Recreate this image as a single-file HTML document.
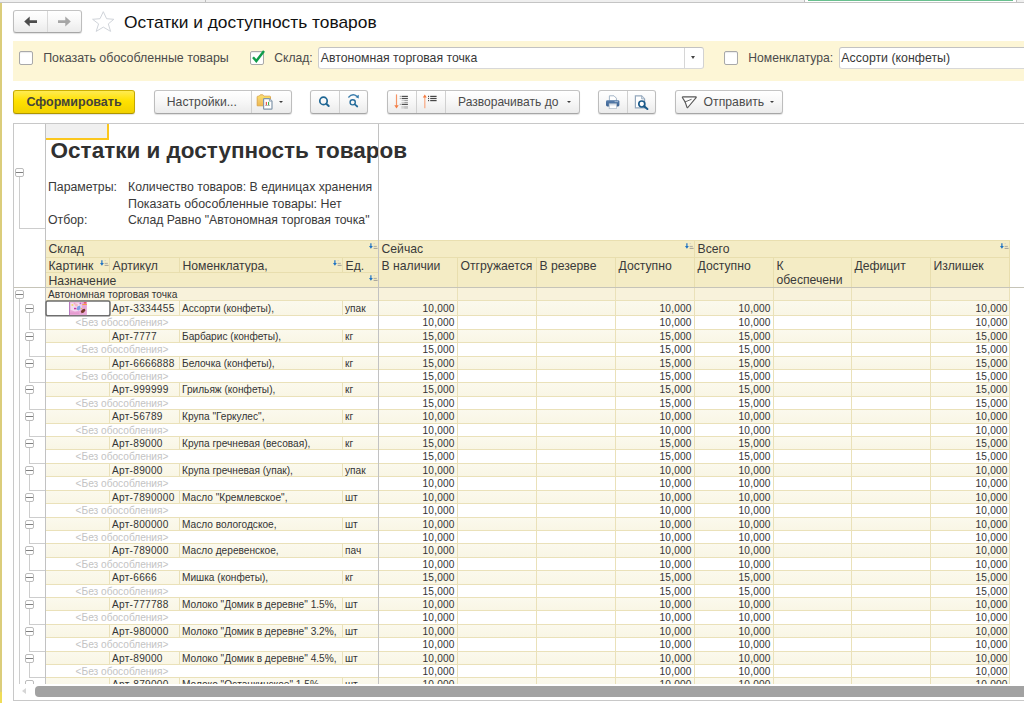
<!DOCTYPE html>
<html><head><meta charset="utf-8"><title>Остатки и доступность товаров</title>
<style>
*{box-sizing:border-box;margin:0;padding:0}
html,body{width:1024px;height:703px;overflow:hidden;background:#fff}
body{position:relative;font-family:"Liberation Sans",sans-serif;color:#3a3a3a}
.a{position:absolute;white-space:nowrap}
.btn{position:absolute;border:1px solid #bcbcbc;border-color:#c4c4c4 #bdbdbd #a6a6a6 #bdbdbd;border-radius:3px;background:linear-gradient(#ffffff,#f7f7f7 50%,#ebebeb);box-shadow:0 1px 1px rgba(0,0,0,.12)}
.lbl{position:absolute;white-space:nowrap;font-size:12px;color:#4b4b4b;line-height:14px}
.cb{position:absolute;width:14px;height:14px;border:1px solid #a9a9a9;border-radius:2px;background:#fff;box-shadow:inset 0 1px 1px rgba(0,0,0,.08)}
.inp{position:absolute;border:1px solid #cfcfcf;border-color:#c2c2c2 #d2d2d2 #d8d8d8 #cdcdcd;border-radius:3px;background:#fff}
.hd{position:absolute;background:#f4ecc5;border-right:1px solid #e8deae;border-bottom:1px solid #e8deae;font-size:12.2px;line-height:14px;color:#3a3a3a;padding:1px 0 0 2.5px;white-space:nowrap;overflow:hidden}
.c{position:absolute;border-right:1px solid #eae1b9;border-bottom:1px solid #eae1b9;font-size:10.15px;color:#343434;white-space:nowrap;overflow:hidden;padding:1px 2px 0 2px}
.d{letter-spacing:.18px}
.da{letter-spacing:.27px}
.it{background:linear-gradient(#fbf9ed,#f9f6e5)}
.gr{background:#f8f2db}
.sb{background:#fff}
.n{text-align:right;padding-right:2.4px}
.nl{padding-right:1.4px}
.g{color:#c3c3c3}
.tl{position:absolute;background:#cdcdcd}
.tb{position:absolute;width:9px;height:9px;border:1px solid #bcbcbc;border-radius:2px;background:#fff}
.tb:after{content:"";position:absolute;left:0;top:3px;width:7px;height:1px;background:#808080}
</style></head>
<body>
<div class="a" style="left:0;top:0;width:1024px;height:2px;background:#efefef"></div>
<div class="a" style="left:0;top:2px;width:1024px;height:1px;background:#c4c4c4"></div>
<div class="a" style="left:205px;top:0;width:1px;height:2px;background:#bdbdbd"></div>
<div class="a" style="left:804px;top:0;width:1px;height:2px;background:#bdbdbd"></div>
<div class="a" style="left:1016px;top:0;width:1px;height:2px;background:#bdbdbd"></div>
<div class="a" style="left:805px;top:0;width:211px;height:2px;background:#fff"></div>
<div class="a" style="left:808px;top:0;width:205px;height:1px;background:#69c08f"></div>
<div class="a" style="left:0;top:3px;width:2px;height:700px;background:#dbcd7b"></div>
<div class="a" style="left:0;top:692px;width:2px;height:11px;background:#efdc58"></div>
<div class="btn" style="left:13px;top:10px;width:69px;height:23px"></div>
<div class="a" style="left:47px;top:11px;width:1px;height:21px;background:#d9d9d9"></div>
<svg class="a" style="left:13px;top:10px" width="70" height="23" viewBox="0 0 70 23"><path d="M11.2 11.6 L16.7 6.6 V10.2 H24 V13 H16.7 V16.6 Z" fill="#4c4c4c"/><path d="M57.8 11.6 L52.3 6.6 V10.2 H45 V13 H52.3 V16.6 Z" fill="#a6a6a6"/></svg>
<svg class="a" style="left:91px;top:10px" width="24" height="24" viewBox="0 0 24 24"><path d="M12.3 1.7 L15.6 8.7 L22.8 9.3 L17.3 13.9 L19.6 21.4 L12.3 17.1 L5.2 21.4 L7.6 13.9 L1.6 9.3 L9 8.7 Z" fill="#fff" stroke="#d0d4da" stroke-width="1" stroke-linejoin="round"/></svg>
<div class="a" style="left:124px;top:12px;font-size:17.35px;line-height:20px;color:#111">Остатки и доступность товаров</div>
<div class="a" style="left:13px;top:41px;width:1011px;height:40px;background:#fdf6d6"></div>
<div class="cb" style="left:19px;top:51px"></div>
<div class="lbl" style="left:43.2px;top:51px;font-size:12.42px">Показать обособленные товары</div>
<div class="cb" style="left:250px;top:51px"></div>
<svg class="a" style="left:250px;top:49px" width="16" height="16" viewBox="0 0 16 16"><path d="M3 8.2 L6.3 12 L14 2" fill="none" stroke="#0f9d4a" stroke-width="2.4"/></svg>
<div class="lbl" style="left:274.3px;top:51px;font-size:12.1px">Склад:</div>
<div class="inp" style="left:318px;top:47px;width:386px;height:22px"></div>
<div class="a" style="left:684px;top:48px;width:1px;height:20px;background:#d6d6d6"></div>
<div class="a" style="left:690.6px;top:56px;width:0;height:0;border-left:2.7px solid transparent;border-right:2.7px solid transparent;border-top:3px solid #444"></div>
<div class="lbl" style="left:320.8px;top:51px;color:#383838;font-size:12.25px">Автономная торговая точка</div>
<div class="cb" style="left:724px;top:51px"></div>
<div class="lbl" style="left:748.3px;top:51px;font-size:12.15px">Номенклатура:</div>
<div class="inp" style="left:839px;top:47px;width:200px;height:22px"></div>
<div class="lbl" style="left:841.3px;top:51px;color:#383838;font-size:12.35px">Ассорти (конфеты)</div>
<div class="btn" style="left:13px;top:90px;width:122px;height:24px;border-color:#cdb100 #c4a700 #ad9400 #c4a700;background:linear-gradient(#ffeb52,#ffe100 45%,#f1d100)"></div>
<div class="a" style="left:13px;top:95px;width:122px;text-align:center;font-size:12.5px;font-weight:bold;color:#44443a;line-height:14px">Сформировать</div>
<div class="btn" style="left:154px;top:90px;width:138px;height:24px"></div>
<div class="a" style="left:251px;top:91px;width:1px;height:22px;background:#d0d0d0"></div>
<div class="lbl" style="left:166.8px;top:95px;font-size:12.22px">Настройки...</div>
<div class="btn" style="left:310px;top:90px;width:58px;height:24px"></div>
<div class="a" style="left:339px;top:91px;width:1px;height:22px;background:#d0d0d0"></div>
<div class="btn" style="left:387px;top:90px;width:193px;height:24px"></div>
<div class="a" style="left:416px;top:91px;width:1px;height:22px;background:#d0d0d0"></div>
<div class="a" style="left:445px;top:91px;width:1px;height:22px;background:#d0d0d0"></div>
<div class="lbl" style="left:458px;top:95px;font-size:12.05px">Разворачивать до</div>
<div class="btn" style="left:598px;top:90px;width:58px;height:24px"></div>
<div class="a" style="left:627px;top:91px;width:1px;height:22px;background:#d0d0d0"></div>
<div class="btn" style="left:675px;top:90px;width:108px;height:24px"></div>
<div class="lbl" style="left:703.6px;top:95px;font-size:12.22px">Отправить</div>
<div class="a" style="left:279px;top:101px;width:0;height:0;border-left:2.8px solid transparent;border-right:2.8px solid transparent;border-top:2.9px solid #3e3e3e"></div>
<div class="a" style="left:566.9px;top:101px;width:0;height:0;border-left:2.8px solid transparent;border-right:2.8px solid transparent;border-top:2.9px solid #3e3e3e"></div>
<div class="a" style="left:770.3px;top:101px;width:0;height:0;border-left:2.8px solid transparent;border-right:2.8px solid transparent;border-top:2.9px solid #3e3e3e"></div>
<svg class="a" style="left:255px;top:92px" width="20" height="20" viewBox="0 0 20 20"><defs><linearGradient id="fg" x1="0" y1="0" x2="0" y2="1"><stop offset="0" stop-color="#f8dc84"/><stop offset="1" stop-color="#eeb94e"/></linearGradient></defs><path d="M2.2 13.8 V4.9 Q2.2 4.2 2.9 4.2 H4.2 L4.7 3.4 Q4.9 2.8 5.7 2.8 H7.5 Q8.2 2.8 8.4 3.4 L8.9 4.2 H14.8 Q15.5 4.2 15.5 4.9 V13.8 Z" fill="url(#fg)" stroke="#dba446" stroke-width=".9"/><rect x="2.8" y="4.7" width="12.1" height="1.5" fill="#fadb5c"/><path d="M9.2 6.6 H14.4 L17 9.2 V16.5 Q17 17.1 16.4 17.1 H9.2 Q8.6 17.1 8.6 16.5 V7.2 Q8.6 6.6 9.2 6.6Z" fill="#fff" stroke="#8296aa" stroke-width="1.2"/><path d="M14.4 6.6 V9.2 H17" fill="#c9d3dd" stroke="#8296aa" stroke-width=".7"/><rect x="10.8" y="9.9" width="1.1" height="3.4" fill="#e8473a"/><rect x="13" y="9.9" width="1.1" height="3.4" fill="#3fae4f"/><rect x="10" y="13.4" width="5" height=".6" fill="#9a9a9a"/></svg>
<svg class="a" style="left:315px;top:93px" width="20" height="18" viewBox="0 0 20 18"><circle cx="8.5" cy="7.9" r="3.7" fill="none" stroke="#1f6694" stroke-width="1.7"/><path d="M11.3 10.7 L13.7 13" stroke="#1f6694" stroke-width="2" stroke-linecap="round"/></svg>
<svg class="a" style="left:344px;top:92px" width="20" height="20" viewBox="0 0 20 20"><circle cx="8.7" cy="10.3" r="2.6" fill="none" stroke="#256c9b" stroke-width="1.4"/><path d="M10.8 12.3 L13.3 14.5" stroke="#256c9b" stroke-width="1.7" stroke-linecap="round"/><path d="M4.4 5.5 Q8.4 .8 13 4.3" fill="none" stroke="#3a7cab" stroke-width="1.3"/><path d="M14.8 2.8 L14.7 6.4 L11.4 5.1 Z" fill="#2f78aa"/></svg>
<svg class="a" style="left:392px;top:92px" width="20" height="20" viewBox="0 0 20 20"><path d="M4.5 2.4 V13.8" stroke="#f59466" stroke-width="1.2"/><path d="M2.3 13.3 H6.7 L4.5 16.6 Z" fill="#f37d45"/><rect x="7.7" y="3.8" width="2" height="1.2" fill="#b0b0b0"/><rect x="9.9" y="3.8" width="6" height="1.2" fill="#505050"/><rect x="7.7" y="5.9" width="2" height="1.2" fill="#b0b0b0"/><rect x="9.9" y="5.9" width="6" height="1.2" fill="#505050"/><rect x="9.5" y="8" width="2.8" height="1.1" fill="#cfcfcf"/><rect x="12.3" y="8" width="3.6" height="1.1" fill="#a2a2a2"/><rect x="9.5" y="10" width="2.8" height="1.1" fill="#cfcfcf"/><rect x="12.3" y="10" width="3.6" height="1.1" fill="#a2a2a2"/><rect x="7.7" y="11.8" width="2" height="1.2" fill="#b0b0b0"/><rect x="9.9" y="11.8" width="6" height="1.2" fill="#505050"/><rect x="9.3" y="14" width="6.6" height="2.7" fill="#d4d4d4"/><rect x="12.3" y="14" width="3.6" height="2.7" fill="#c4c4c4"/></svg>
<svg class="a" style="left:420px;top:92px" width="20" height="20" viewBox="0 0 20 20"><path d="M4.8 4.6 V16.2" stroke="#f8ae8a" stroke-width="1.3"/><path d="M2.8 5.6 L4.8 2.6 L6.8 5.6 Z" fill="#f4793d"/><rect x="8" y="3.8" width="1.1" height="1.2" fill="#4a4a4a"/><rect x="10.2" y="3.8" width="6.4" height="1.2" fill="#484848"/><rect x="8" y="5.9" width="1.1" height="1.2" fill="#4a4a4a"/><rect x="10.2" y="5.9" width="6.4" height="1.2" fill="#484848"/><rect x="8" y="8" width="1.1" height="1.2" fill="#4a4a4a"/><rect x="10.2" y="8" width="6.4" height="1.2" fill="#484848"/></svg>
<svg class="a" style="left:603px;top:92px" width="20" height="20" viewBox="0 0 20 20"><defs><linearGradient id="pg" x1="0" y1="0" x2="0" y2="1"><stop offset="0" stop-color="#5a80ae"/><stop offset="1" stop-color="#3b6292"/></linearGradient></defs><path d="M6.4 3.8 H11 L13.4 6.2 V9 H6.4 Z" fill="#fff" stroke="#a3b4c6" stroke-width="1"/><rect x="3" y="8.2" width="13.4" height="6.2" rx="1.4" fill="url(#pg)"/><rect x="11.6" y="9.3" width="3.4" height=".8" fill="#b9cbe0"/><rect x="6.2" y="11.8" width="7.2" height="4.8" fill="#fff" stroke="#b5c1ce" stroke-width=".8"/><rect x="6.6" y="12.2" width="6.4" height="1.2" fill="#d5dde6"/></svg>
<svg class="a" style="left:632px;top:92px" width="20" height="20" viewBox="0 0 20 20"><path d="M3.4 3.9 H9.6 L12.6 6.9 V15.8 H3.4 Z" fill="#fff" stroke="#93a7bc" stroke-width="1.2"/><path d="M9.6 3.9 V6.9 H12.6" fill="#d4dde7" stroke="#93a7bc" stroke-width=".8"/><circle cx="9.8" cy="12" r="3" fill="#fff" stroke="#1b5a8a" stroke-width="1.7"/><path d="M12.2 14.4 L15.4 17" stroke="#1b5a8a" stroke-width="2" stroke-linecap="round"/></svg>
<svg class="a" style="left:679px;top:92px" width="22" height="20" viewBox="0 0 22 20"><path d="M3.9 4.9 H16.8 Q17.6 4.9 17.1 5.6 L8.8 15.5 Q8.3 16 8 15.3 L6.1 9.9 L3.5 5.7 Q3.1 4.9 3.9 4.9 Z" fill="#fdfdfd" stroke="#575757" stroke-width="1.15" stroke-linejoin="round"/><path d="M6.1 9.9 L12.2 7.4" fill="none" stroke="#575757" stroke-width=".9" stroke-linecap="round"/></svg>
<div class="a" style="left:13px;top:123px;width:1020px;height:578px;border:1px solid #c8c8c8;background:#fff"></div>
<div class="a" style="left:46px;top:124px;width:63px;height:16px;background:#f0f0f0;border-right:2px solid #fbc71e;border-bottom:2px solid #fbc71e"></div>
<div class="a" style="left:50.6px;top:137px;font-size:22.5px;font-weight:bold;line-height:28px;color:#303030">Остатки и доступность товаров</div>
<div class="lbl" style="left:48px;top:180px;color:#3a3a3a;font-size:12.3px">Параметры:</div>
<div class="lbl" style="left:128px;top:180px;color:#3a3a3a;font-size:12.25px">Количество товаров: В единицах хранения</div>
<div class="lbl" style="left:128px;top:197px;color:#3a3a3a;font-size:12.42px">Показать обособленные товары: Нет</div>
<div class="lbl" style="left:48px;top:213px;color:#3a3a3a;font-size:12.3px">Отбор:</div>
<div class="lbl" style="left:128px;top:213px;color:#3a3a3a;font-size:12.23px">Склад Равно "Автономная торговая точка"</div>
<div class="hd" style="left:46px;top:240px;width:333px;height:18px;padding-top:2px">Склад</div>
<div class="hd" style="left:46px;top:258px;width:64px;height:15px;padding-top:1px">Картинк</div>
<div class="hd" style="left:110px;top:258px;width:70px;height:15px;padding-top:1px">Артикул</div>
<div class="hd" style="left:180px;top:258px;width:163px;height:15px;padding-top:1px">Номенклатура,</div>
<div class="hd" style="left:343px;top:258px;width:36px;height:15px;padding-top:1px">Ед.</div>
<div class="hd" style="left:46px;top:273px;width:333px;height:15px;padding-top:1px">Назначение</div>
<div class="hd" style="left:379px;top:240px;width:316px;height:18px;padding-top:2px">Сейчас</div>
<div class="hd" style="left:695px;top:240px;width:315px;height:18px;padding-top:2px">Всего</div>
<div class="hd" style="left:379px;top:258px;width:79px;height:30px;padding-top:1px">В наличии</div>
<div class="hd" style="left:458px;top:258px;width:79px;height:30px;padding-top:1px">Отгружается</div>
<div class="hd" style="left:537px;top:258px;width:79px;height:30px;padding-top:1px">В резерве</div>
<div class="hd" style="left:616px;top:258px;width:79px;height:30px;padding-top:1px">Доступно</div>
<div class="hd" style="left:695px;top:258px;width:79px;height:30px;padding-top:1px">Доступно</div>
<div class="hd" style="left:774px;top:258px;width:78px;height:30px;padding-top:1px">К<br>обеспечени</div>
<div class="hd" style="left:852px;top:258px;width:79px;height:30px;padding-top:1px">Дефицит</div>
<div class="hd" style="left:931px;top:258px;width:79px;height:30px;padding-top:1px">Излишек</div>
<div class="a" style="left:46px;top:240px;width:964px;height:1px;background:#e9dfb0"></div>
<svg class="a" style="left:368.9px;top:243.0px" width="9" height="7" viewBox="0 0 9 7"><path d="M1.9 .2 V4" stroke="#1d72c4" stroke-width="1.2"/><path d="M0 3.1 H3.8 L1.9 5.8Z" fill="#1d72c4"/><rect x="4.6" y=".4" width="1.2" height=".7" fill="#c4c4c4"/><rect x="4.6" y="2.9" width="3.2" height=".8" fill="#9a9a9a"/><rect x="4.6" y="4.9" width="4" height=".8" fill="#8c8c8c"/></svg>
<svg class="a" style="left:684.9px;top:243.0px" width="9" height="7" viewBox="0 0 9 7"><path d="M1.9 .2 V4" stroke="#1d72c4" stroke-width="1.2"/><path d="M0 3.1 H3.8 L1.9 5.8Z" fill="#1d72c4"/><rect x="4.6" y=".4" width="1.2" height=".7" fill="#c4c4c4"/><rect x="4.6" y="2.9" width="3.2" height=".8" fill="#9a9a9a"/><rect x="4.6" y="4.9" width="4" height=".8" fill="#8c8c8c"/></svg>
<svg class="a" style="left:999.9px;top:243.0px" width="9" height="7" viewBox="0 0 9 7"><path d="M1.9 .2 V4" stroke="#1d72c4" stroke-width="1.2"/><path d="M0 3.1 H3.8 L1.9 5.8Z" fill="#1d72c4"/><rect x="4.6" y=".4" width="1.2" height=".7" fill="#c4c4c4"/><rect x="4.6" y="2.9" width="3.2" height=".8" fill="#9a9a9a"/><rect x="4.6" y="4.9" width="4" height=".8" fill="#8c8c8c"/></svg>
<svg class="a" style="left:99.9px;top:260.2px" width="9" height="7" viewBox="0 0 9 7"><path d="M1.9 .2 V4" stroke="#1d72c4" stroke-width="1.2"/><path d="M0 3.1 H3.8 L1.9 5.8Z" fill="#1d72c4"/><rect x="4.6" y=".4" width="1.2" height=".7" fill="#c4c4c4"/><rect x="4.6" y="2.9" width="3.2" height=".8" fill="#9a9a9a"/><rect x="4.6" y="4.9" width="4" height=".8" fill="#8c8c8c"/></svg>
<svg class="a" style="left:332.9px;top:260.2px" width="9" height="7" viewBox="0 0 9 7"><path d="M1.9 .2 V4" stroke="#1d72c4" stroke-width="1.2"/><path d="M0 3.1 H3.8 L1.9 5.8Z" fill="#1d72c4"/><rect x="4.6" y=".4" width="1.2" height=".7" fill="#c4c4c4"/><rect x="4.6" y="2.9" width="3.2" height=".8" fill="#9a9a9a"/><rect x="4.6" y="4.9" width="4" height=".8" fill="#8c8c8c"/></svg>
<svg class="a" style="left:368.9px;top:274.9px" width="9" height="7" viewBox="0 0 9 7"><path d="M1.9 .2 V4" stroke="#1d72c4" stroke-width="1.2"/><path d="M0 3.1 H3.8 L1.9 5.8Z" fill="#1d72c4"/><rect x="4.6" y=".4" width="1.2" height=".7" fill="#c4c4c4"/><rect x="4.6" y="2.9" width="3.2" height=".8" fill="#9a9a9a"/><rect x="4.6" y="4.9" width="4" height=".8" fill="#8c8c8c"/></svg>
<div class="a" id="tbl" style="left:0;top:0;width:1024px;height:684px;overflow:hidden">
<div class="c gr" style="left:46px;top:288px;width:333px;height:13px;line-height:12px">Автономная торговая точка</div>
<div class="c gr" style="left:379px;top:288px;width:79px;height:13px;line-height:12px"></div>
<div class="c gr" style="left:458px;top:288px;width:79px;height:13px;line-height:12px"></div>
<div class="c gr" style="left:537px;top:288px;width:79px;height:13px;line-height:12px"></div>
<div class="c gr" style="left:616px;top:288px;width:79px;height:13px;line-height:12px"></div>
<div class="c gr" style="left:695px;top:288px;width:79px;height:13px;line-height:12px"></div>
<div class="c gr" style="left:774px;top:288px;width:78px;height:13px;line-height:12px"></div>
<div class="c gr" style="left:852px;top:288px;width:79px;height:13px;line-height:12px"></div>
<div class="c gr" style="left:931px;top:288px;width:79px;height:13px;line-height:12px"></div>
<div class="c it" style="left:46px;top:301px;width:64px;height:15px;line-height:14px"></div>
<div class="c it da" style="left:110px;top:301px;width:70px;height:15px;line-height:14px">Арт-3334455</div>
<div class="c it" style="left:180px;top:301px;width:163px;height:15px;line-height:14px">Ассорти (конфеты),</div>
<div class="c it" style="left:343px;top:301px;width:36px;height:15px;line-height:14px">упак</div>
<div class="c it n d" style="left:379px;top:301px;width:79px;height:15px;line-height:14px">10,000</div>
<div class="c it n d" style="left:458px;top:301px;width:79px;height:15px;line-height:14px"></div>
<div class="c it n d" style="left:537px;top:301px;width:79px;height:15px;line-height:14px"></div>
<div class="c it n d" style="left:616px;top:301px;width:79px;height:15px;line-height:14px">10,000</div>
<div class="c it n d" style="left:695px;top:301px;width:79px;height:15px;line-height:14px">10,000</div>
<div class="c it n d" style="left:774px;top:301px;width:78px;height:15px;line-height:14px"></div>
<div class="c it n d" style="left:852px;top:301px;width:79px;height:15px;line-height:14px"></div>
<div class="c it n d nl" style="left:931px;top:301px;width:79px;height:15px;line-height:14px">10,000</div>
<div class="c sb g" style="left:46px;top:316px;width:333px;height:14px;line-height:12px;padding-left:29.6px">&lt;Без обособления&gt;</div>
<div class="c sb n d" style="left:379px;top:316px;width:79px;height:14px;line-height:12px">10,000</div>
<div class="c sb n d" style="left:458px;top:316px;width:79px;height:14px;line-height:12px"></div>
<div class="c sb n d" style="left:537px;top:316px;width:79px;height:14px;line-height:12px"></div>
<div class="c sb n d" style="left:616px;top:316px;width:79px;height:14px;line-height:12px">10,000</div>
<div class="c sb n d" style="left:695px;top:316px;width:79px;height:14px;line-height:12px">10,000</div>
<div class="c sb n d" style="left:774px;top:316px;width:78px;height:14px;line-height:12px"></div>
<div class="c sb n d" style="left:852px;top:316px;width:79px;height:14px;line-height:12px"></div>
<div class="c sb n d nl" style="left:931px;top:316px;width:79px;height:14px;line-height:12px">10,000</div>
<div class="c it" style="left:46px;top:330px;width:64px;height:13px;line-height:12px"></div>
<div class="c it da" style="left:110px;top:330px;width:70px;height:13px;line-height:12px">Арт-7777</div>
<div class="c it" style="left:180px;top:330px;width:163px;height:13px;line-height:12px">Барбарис (конфеты),</div>
<div class="c it" style="left:343px;top:330px;width:36px;height:13px;line-height:12px">кг</div>
<div class="c it n d" style="left:379px;top:330px;width:79px;height:13px;line-height:12px">15,000</div>
<div class="c it n d" style="left:458px;top:330px;width:79px;height:13px;line-height:12px"></div>
<div class="c it n d" style="left:537px;top:330px;width:79px;height:13px;line-height:12px"></div>
<div class="c it n d" style="left:616px;top:330px;width:79px;height:13px;line-height:12px">15,000</div>
<div class="c it n d" style="left:695px;top:330px;width:79px;height:13px;line-height:12px">15,000</div>
<div class="c it n d" style="left:774px;top:330px;width:78px;height:13px;line-height:12px"></div>
<div class="c it n d" style="left:852px;top:330px;width:79px;height:13px;line-height:12px"></div>
<div class="c it n d nl" style="left:931px;top:330px;width:79px;height:13px;line-height:12px">15,000</div>
<div class="c sb g" style="left:46px;top:343px;width:333px;height:14px;line-height:12px;padding-left:29.6px">&lt;Без обособления&gt;</div>
<div class="c sb n d" style="left:379px;top:343px;width:79px;height:14px;line-height:12px">15,000</div>
<div class="c sb n d" style="left:458px;top:343px;width:79px;height:14px;line-height:12px"></div>
<div class="c sb n d" style="left:537px;top:343px;width:79px;height:14px;line-height:12px"></div>
<div class="c sb n d" style="left:616px;top:343px;width:79px;height:14px;line-height:12px">15,000</div>
<div class="c sb n d" style="left:695px;top:343px;width:79px;height:14px;line-height:12px">15,000</div>
<div class="c sb n d" style="left:774px;top:343px;width:78px;height:14px;line-height:12px"></div>
<div class="c sb n d" style="left:852px;top:343px;width:79px;height:14px;line-height:12px"></div>
<div class="c sb n d nl" style="left:931px;top:343px;width:79px;height:14px;line-height:12px">15,000</div>
<div class="c it" style="left:46px;top:357px;width:64px;height:13px;line-height:12px"></div>
<div class="c it da" style="left:110px;top:357px;width:70px;height:13px;line-height:12px">Арт-6666888</div>
<div class="c it" style="left:180px;top:357px;width:163px;height:13px;line-height:12px">Белочка (конфеты),</div>
<div class="c it" style="left:343px;top:357px;width:36px;height:13px;line-height:12px">кг</div>
<div class="c it n d" style="left:379px;top:357px;width:79px;height:13px;line-height:12px">15,000</div>
<div class="c it n d" style="left:458px;top:357px;width:79px;height:13px;line-height:12px"></div>
<div class="c it n d" style="left:537px;top:357px;width:79px;height:13px;line-height:12px"></div>
<div class="c it n d" style="left:616px;top:357px;width:79px;height:13px;line-height:12px">15,000</div>
<div class="c it n d" style="left:695px;top:357px;width:79px;height:13px;line-height:12px">15,000</div>
<div class="c it n d" style="left:774px;top:357px;width:78px;height:13px;line-height:12px"></div>
<div class="c it n d" style="left:852px;top:357px;width:79px;height:13px;line-height:12px"></div>
<div class="c it n d nl" style="left:931px;top:357px;width:79px;height:13px;line-height:12px">15,000</div>
<div class="c sb g" style="left:46px;top:370px;width:333px;height:13px;line-height:12px;padding-left:29.6px">&lt;Без обособления&gt;</div>
<div class="c sb n d" style="left:379px;top:370px;width:79px;height:13px;line-height:12px">15,000</div>
<div class="c sb n d" style="left:458px;top:370px;width:79px;height:13px;line-height:12px"></div>
<div class="c sb n d" style="left:537px;top:370px;width:79px;height:13px;line-height:12px"></div>
<div class="c sb n d" style="left:616px;top:370px;width:79px;height:13px;line-height:12px">15,000</div>
<div class="c sb n d" style="left:695px;top:370px;width:79px;height:13px;line-height:12px">15,000</div>
<div class="c sb n d" style="left:774px;top:370px;width:78px;height:13px;line-height:12px"></div>
<div class="c sb n d" style="left:852px;top:370px;width:79px;height:13px;line-height:12px"></div>
<div class="c sb n d nl" style="left:931px;top:370px;width:79px;height:13px;line-height:12px">15,000</div>
<div class="c it" style="left:46px;top:383px;width:64px;height:14px;line-height:12px"></div>
<div class="c it da" style="left:110px;top:383px;width:70px;height:14px;line-height:12px">Арт-999999</div>
<div class="c it" style="left:180px;top:383px;width:163px;height:14px;line-height:12px">Грильяж (конфеты),</div>
<div class="c it" style="left:343px;top:383px;width:36px;height:14px;line-height:12px">кг</div>
<div class="c it n d" style="left:379px;top:383px;width:79px;height:14px;line-height:12px">15,000</div>
<div class="c it n d" style="left:458px;top:383px;width:79px;height:14px;line-height:12px"></div>
<div class="c it n d" style="left:537px;top:383px;width:79px;height:14px;line-height:12px"></div>
<div class="c it n d" style="left:616px;top:383px;width:79px;height:14px;line-height:12px">15,000</div>
<div class="c it n d" style="left:695px;top:383px;width:79px;height:14px;line-height:12px">15,000</div>
<div class="c it n d" style="left:774px;top:383px;width:78px;height:14px;line-height:12px"></div>
<div class="c it n d" style="left:852px;top:383px;width:79px;height:14px;line-height:12px"></div>
<div class="c it n d nl" style="left:931px;top:383px;width:79px;height:14px;line-height:12px">15,000</div>
<div class="c sb g" style="left:46px;top:397px;width:333px;height:13px;line-height:12px;padding-left:29.6px">&lt;Без обособления&gt;</div>
<div class="c sb n d" style="left:379px;top:397px;width:79px;height:13px;line-height:12px">15,000</div>
<div class="c sb n d" style="left:458px;top:397px;width:79px;height:13px;line-height:12px"></div>
<div class="c sb n d" style="left:537px;top:397px;width:79px;height:13px;line-height:12px"></div>
<div class="c sb n d" style="left:616px;top:397px;width:79px;height:13px;line-height:12px">15,000</div>
<div class="c sb n d" style="left:695px;top:397px;width:79px;height:13px;line-height:12px">15,000</div>
<div class="c sb n d" style="left:774px;top:397px;width:78px;height:13px;line-height:12px"></div>
<div class="c sb n d" style="left:852px;top:397px;width:79px;height:13px;line-height:12px"></div>
<div class="c sb n d nl" style="left:931px;top:397px;width:79px;height:13px;line-height:12px">15,000</div>
<div class="c it" style="left:46px;top:410px;width:64px;height:14px;line-height:12px"></div>
<div class="c it da" style="left:110px;top:410px;width:70px;height:14px;line-height:12px">Арт-56789</div>
<div class="c it" style="left:180px;top:410px;width:163px;height:14px;line-height:12px">Крупа "Геркулес",</div>
<div class="c it" style="left:343px;top:410px;width:36px;height:14px;line-height:12px">кг</div>
<div class="c it n d" style="left:379px;top:410px;width:79px;height:14px;line-height:12px">10,000</div>
<div class="c it n d" style="left:458px;top:410px;width:79px;height:14px;line-height:12px"></div>
<div class="c it n d" style="left:537px;top:410px;width:79px;height:14px;line-height:12px"></div>
<div class="c it n d" style="left:616px;top:410px;width:79px;height:14px;line-height:12px">10,000</div>
<div class="c it n d" style="left:695px;top:410px;width:79px;height:14px;line-height:12px">10,000</div>
<div class="c it n d" style="left:774px;top:410px;width:78px;height:14px;line-height:12px"></div>
<div class="c it n d" style="left:852px;top:410px;width:79px;height:14px;line-height:12px"></div>
<div class="c it n d nl" style="left:931px;top:410px;width:79px;height:14px;line-height:12px">10,000</div>
<div class="c sb g" style="left:46px;top:424px;width:333px;height:13px;line-height:12px;padding-left:29.6px">&lt;Без обособления&gt;</div>
<div class="c sb n d" style="left:379px;top:424px;width:79px;height:13px;line-height:12px">10,000</div>
<div class="c sb n d" style="left:458px;top:424px;width:79px;height:13px;line-height:12px"></div>
<div class="c sb n d" style="left:537px;top:424px;width:79px;height:13px;line-height:12px"></div>
<div class="c sb n d" style="left:616px;top:424px;width:79px;height:13px;line-height:12px">10,000</div>
<div class="c sb n d" style="left:695px;top:424px;width:79px;height:13px;line-height:12px">10,000</div>
<div class="c sb n d" style="left:774px;top:424px;width:78px;height:13px;line-height:12px"></div>
<div class="c sb n d" style="left:852px;top:424px;width:79px;height:13px;line-height:12px"></div>
<div class="c sb n d nl" style="left:931px;top:424px;width:79px;height:13px;line-height:12px">10,000</div>
<div class="c it" style="left:46px;top:437px;width:64px;height:13px;line-height:12px"></div>
<div class="c it da" style="left:110px;top:437px;width:70px;height:13px;line-height:12px">Арт-89000</div>
<div class="c it" style="left:180px;top:437px;width:163px;height:13px;line-height:12px">Крупа гречневая (весовая),</div>
<div class="c it" style="left:343px;top:437px;width:36px;height:13px;line-height:12px">кг</div>
<div class="c it n d" style="left:379px;top:437px;width:79px;height:13px;line-height:12px">15,000</div>
<div class="c it n d" style="left:458px;top:437px;width:79px;height:13px;line-height:12px"></div>
<div class="c it n d" style="left:537px;top:437px;width:79px;height:13px;line-height:12px"></div>
<div class="c it n d" style="left:616px;top:437px;width:79px;height:13px;line-height:12px">15,000</div>
<div class="c it n d" style="left:695px;top:437px;width:79px;height:13px;line-height:12px">15,000</div>
<div class="c it n d" style="left:774px;top:437px;width:78px;height:13px;line-height:12px"></div>
<div class="c it n d" style="left:852px;top:437px;width:79px;height:13px;line-height:12px"></div>
<div class="c it n d nl" style="left:931px;top:437px;width:79px;height:13px;line-height:12px">15,000</div>
<div class="c sb g" style="left:46px;top:450px;width:333px;height:14px;line-height:12px;padding-left:29.6px">&lt;Без обособления&gt;</div>
<div class="c sb n d" style="left:379px;top:450px;width:79px;height:14px;line-height:12px">15,000</div>
<div class="c sb n d" style="left:458px;top:450px;width:79px;height:14px;line-height:12px"></div>
<div class="c sb n d" style="left:537px;top:450px;width:79px;height:14px;line-height:12px"></div>
<div class="c sb n d" style="left:616px;top:450px;width:79px;height:14px;line-height:12px">15,000</div>
<div class="c sb n d" style="left:695px;top:450px;width:79px;height:14px;line-height:12px">15,000</div>
<div class="c sb n d" style="left:774px;top:450px;width:78px;height:14px;line-height:12px"></div>
<div class="c sb n d" style="left:852px;top:450px;width:79px;height:14px;line-height:12px"></div>
<div class="c sb n d nl" style="left:931px;top:450px;width:79px;height:14px;line-height:12px">15,000</div>
<div class="c it" style="left:46px;top:464px;width:64px;height:13px;line-height:12px"></div>
<div class="c it da" style="left:110px;top:464px;width:70px;height:13px;line-height:12px">Арт-89000</div>
<div class="c it" style="left:180px;top:464px;width:163px;height:13px;line-height:12px">Крупа гречневая (упак),</div>
<div class="c it" style="left:343px;top:464px;width:36px;height:13px;line-height:12px">упак</div>
<div class="c it n d" style="left:379px;top:464px;width:79px;height:13px;line-height:12px">10,000</div>
<div class="c it n d" style="left:458px;top:464px;width:79px;height:13px;line-height:12px"></div>
<div class="c it n d" style="left:537px;top:464px;width:79px;height:13px;line-height:12px"></div>
<div class="c it n d" style="left:616px;top:464px;width:79px;height:13px;line-height:12px">10,000</div>
<div class="c it n d" style="left:695px;top:464px;width:79px;height:13px;line-height:12px">10,000</div>
<div class="c it n d" style="left:774px;top:464px;width:78px;height:13px;line-height:12px"></div>
<div class="c it n d" style="left:852px;top:464px;width:79px;height:13px;line-height:12px"></div>
<div class="c it n d nl" style="left:931px;top:464px;width:79px;height:13px;line-height:12px">10,000</div>
<div class="c sb g" style="left:46px;top:477px;width:333px;height:14px;line-height:12px;padding-left:29.6px">&lt;Без обособления&gt;</div>
<div class="c sb n d" style="left:379px;top:477px;width:79px;height:14px;line-height:12px">10,000</div>
<div class="c sb n d" style="left:458px;top:477px;width:79px;height:14px;line-height:12px"></div>
<div class="c sb n d" style="left:537px;top:477px;width:79px;height:14px;line-height:12px"></div>
<div class="c sb n d" style="left:616px;top:477px;width:79px;height:14px;line-height:12px">10,000</div>
<div class="c sb n d" style="left:695px;top:477px;width:79px;height:14px;line-height:12px">10,000</div>
<div class="c sb n d" style="left:774px;top:477px;width:78px;height:14px;line-height:12px"></div>
<div class="c sb n d" style="left:852px;top:477px;width:79px;height:14px;line-height:12px"></div>
<div class="c sb n d nl" style="left:931px;top:477px;width:79px;height:14px;line-height:12px">10,000</div>
<div class="c it" style="left:46px;top:491px;width:64px;height:13px;line-height:12px"></div>
<div class="c it da" style="left:110px;top:491px;width:70px;height:13px;line-height:12px">Арт-7890000</div>
<div class="c it" style="left:180px;top:491px;width:163px;height:13px;line-height:12px">Масло "Кремлевское",</div>
<div class="c it" style="left:343px;top:491px;width:36px;height:13px;line-height:12px">шт</div>
<div class="c it n d" style="left:379px;top:491px;width:79px;height:13px;line-height:12px">10,000</div>
<div class="c it n d" style="left:458px;top:491px;width:79px;height:13px;line-height:12px"></div>
<div class="c it n d" style="left:537px;top:491px;width:79px;height:13px;line-height:12px"></div>
<div class="c it n d" style="left:616px;top:491px;width:79px;height:13px;line-height:12px">10,000</div>
<div class="c it n d" style="left:695px;top:491px;width:79px;height:13px;line-height:12px">10,000</div>
<div class="c it n d" style="left:774px;top:491px;width:78px;height:13px;line-height:12px"></div>
<div class="c it n d" style="left:852px;top:491px;width:79px;height:13px;line-height:12px"></div>
<div class="c it n d nl" style="left:931px;top:491px;width:79px;height:13px;line-height:12px">10,000</div>
<div class="c sb g" style="left:46px;top:504px;width:333px;height:14px;line-height:12px;padding-left:29.6px">&lt;Без обособления&gt;</div>
<div class="c sb n d" style="left:379px;top:504px;width:79px;height:14px;line-height:12px">10,000</div>
<div class="c sb n d" style="left:458px;top:504px;width:79px;height:14px;line-height:12px"></div>
<div class="c sb n d" style="left:537px;top:504px;width:79px;height:14px;line-height:12px"></div>
<div class="c sb n d" style="left:616px;top:504px;width:79px;height:14px;line-height:12px">10,000</div>
<div class="c sb n d" style="left:695px;top:504px;width:79px;height:14px;line-height:12px">10,000</div>
<div class="c sb n d" style="left:774px;top:504px;width:78px;height:14px;line-height:12px"></div>
<div class="c sb n d" style="left:852px;top:504px;width:79px;height:14px;line-height:12px"></div>
<div class="c sb n d nl" style="left:931px;top:504px;width:79px;height:14px;line-height:12px">10,000</div>
<div class="c it" style="left:46px;top:518px;width:64px;height:13px;line-height:12px"></div>
<div class="c it da" style="left:110px;top:518px;width:70px;height:13px;line-height:12px">Арт-800000</div>
<div class="c it" style="left:180px;top:518px;width:163px;height:13px;line-height:12px">Масло вологодское,</div>
<div class="c it" style="left:343px;top:518px;width:36px;height:13px;line-height:12px">шт</div>
<div class="c it n d" style="left:379px;top:518px;width:79px;height:13px;line-height:12px">10,000</div>
<div class="c it n d" style="left:458px;top:518px;width:79px;height:13px;line-height:12px"></div>
<div class="c it n d" style="left:537px;top:518px;width:79px;height:13px;line-height:12px"></div>
<div class="c it n d" style="left:616px;top:518px;width:79px;height:13px;line-height:12px">10,000</div>
<div class="c it n d" style="left:695px;top:518px;width:79px;height:13px;line-height:12px">10,000</div>
<div class="c it n d" style="left:774px;top:518px;width:78px;height:13px;line-height:12px"></div>
<div class="c it n d" style="left:852px;top:518px;width:79px;height:13px;line-height:12px"></div>
<div class="c it n d nl" style="left:931px;top:518px;width:79px;height:13px;line-height:12px">10,000</div>
<div class="c sb g" style="left:46px;top:531px;width:333px;height:13px;line-height:12px;padding-left:29.6px">&lt;Без обособления&gt;</div>
<div class="c sb n d" style="left:379px;top:531px;width:79px;height:13px;line-height:12px">10,000</div>
<div class="c sb n d" style="left:458px;top:531px;width:79px;height:13px;line-height:12px"></div>
<div class="c sb n d" style="left:537px;top:531px;width:79px;height:13px;line-height:12px"></div>
<div class="c sb n d" style="left:616px;top:531px;width:79px;height:13px;line-height:12px">10,000</div>
<div class="c sb n d" style="left:695px;top:531px;width:79px;height:13px;line-height:12px">10,000</div>
<div class="c sb n d" style="left:774px;top:531px;width:78px;height:13px;line-height:12px"></div>
<div class="c sb n d" style="left:852px;top:531px;width:79px;height:13px;line-height:12px"></div>
<div class="c sb n d nl" style="left:931px;top:531px;width:79px;height:13px;line-height:12px">10,000</div>
<div class="c it" style="left:46px;top:544px;width:64px;height:14px;line-height:12px"></div>
<div class="c it da" style="left:110px;top:544px;width:70px;height:14px;line-height:12px">Арт-789000</div>
<div class="c it" style="left:180px;top:544px;width:163px;height:14px;line-height:12px">Масло деревенское,</div>
<div class="c it" style="left:343px;top:544px;width:36px;height:14px;line-height:12px">пач</div>
<div class="c it n d" style="left:379px;top:544px;width:79px;height:14px;line-height:12px">10,000</div>
<div class="c it n d" style="left:458px;top:544px;width:79px;height:14px;line-height:12px"></div>
<div class="c it n d" style="left:537px;top:544px;width:79px;height:14px;line-height:12px"></div>
<div class="c it n d" style="left:616px;top:544px;width:79px;height:14px;line-height:12px">10,000</div>
<div class="c it n d" style="left:695px;top:544px;width:79px;height:14px;line-height:12px">10,000</div>
<div class="c it n d" style="left:774px;top:544px;width:78px;height:14px;line-height:12px"></div>
<div class="c it n d" style="left:852px;top:544px;width:79px;height:14px;line-height:12px"></div>
<div class="c it n d nl" style="left:931px;top:544px;width:79px;height:14px;line-height:12px">10,000</div>
<div class="c sb g" style="left:46px;top:558px;width:333px;height:13px;line-height:12px;padding-left:29.6px">&lt;Без обособления&gt;</div>
<div class="c sb n d" style="left:379px;top:558px;width:79px;height:13px;line-height:12px">10,000</div>
<div class="c sb n d" style="left:458px;top:558px;width:79px;height:13px;line-height:12px"></div>
<div class="c sb n d" style="left:537px;top:558px;width:79px;height:13px;line-height:12px"></div>
<div class="c sb n d" style="left:616px;top:558px;width:79px;height:13px;line-height:12px">10,000</div>
<div class="c sb n d" style="left:695px;top:558px;width:79px;height:13px;line-height:12px">10,000</div>
<div class="c sb n d" style="left:774px;top:558px;width:78px;height:13px;line-height:12px"></div>
<div class="c sb n d" style="left:852px;top:558px;width:79px;height:13px;line-height:12px"></div>
<div class="c sb n d nl" style="left:931px;top:558px;width:79px;height:13px;line-height:12px">10,000</div>
<div class="c it" style="left:46px;top:571px;width:64px;height:14px;line-height:12px"></div>
<div class="c it da" style="left:110px;top:571px;width:70px;height:14px;line-height:12px">Арт-6666</div>
<div class="c it" style="left:180px;top:571px;width:163px;height:14px;line-height:12px">Мишка (конфеты),</div>
<div class="c it" style="left:343px;top:571px;width:36px;height:14px;line-height:12px">кг</div>
<div class="c it n d" style="left:379px;top:571px;width:79px;height:14px;line-height:12px">15,000</div>
<div class="c it n d" style="left:458px;top:571px;width:79px;height:14px;line-height:12px"></div>
<div class="c it n d" style="left:537px;top:571px;width:79px;height:14px;line-height:12px"></div>
<div class="c it n d" style="left:616px;top:571px;width:79px;height:14px;line-height:12px">15,000</div>
<div class="c it n d" style="left:695px;top:571px;width:79px;height:14px;line-height:12px">15,000</div>
<div class="c it n d" style="left:774px;top:571px;width:78px;height:14px;line-height:12px"></div>
<div class="c it n d" style="left:852px;top:571px;width:79px;height:14px;line-height:12px"></div>
<div class="c it n d nl" style="left:931px;top:571px;width:79px;height:14px;line-height:12px">15,000</div>
<div class="c sb g" style="left:46px;top:585px;width:333px;height:13px;line-height:12px;padding-left:29.6px">&lt;Без обособления&gt;</div>
<div class="c sb n d" style="left:379px;top:585px;width:79px;height:13px;line-height:12px">15,000</div>
<div class="c sb n d" style="left:458px;top:585px;width:79px;height:13px;line-height:12px"></div>
<div class="c sb n d" style="left:537px;top:585px;width:79px;height:13px;line-height:12px"></div>
<div class="c sb n d" style="left:616px;top:585px;width:79px;height:13px;line-height:12px">15,000</div>
<div class="c sb n d" style="left:695px;top:585px;width:79px;height:13px;line-height:12px">15,000</div>
<div class="c sb n d" style="left:774px;top:585px;width:78px;height:13px;line-height:12px"></div>
<div class="c sb n d" style="left:852px;top:585px;width:79px;height:13px;line-height:12px"></div>
<div class="c sb n d nl" style="left:931px;top:585px;width:79px;height:13px;line-height:12px">15,000</div>
<div class="c it" style="left:46px;top:598px;width:64px;height:13px;line-height:12px"></div>
<div class="c it da" style="left:110px;top:598px;width:70px;height:13px;line-height:12px">Арт-777788</div>
<div class="c it" style="left:180px;top:598px;width:163px;height:13px;line-height:12px">Молоко "Домик в деревне" 1.5%,</div>
<div class="c it" style="left:343px;top:598px;width:36px;height:13px;line-height:12px">шт</div>
<div class="c it n d" style="left:379px;top:598px;width:79px;height:13px;line-height:12px">10,000</div>
<div class="c it n d" style="left:458px;top:598px;width:79px;height:13px;line-height:12px"></div>
<div class="c it n d" style="left:537px;top:598px;width:79px;height:13px;line-height:12px"></div>
<div class="c it n d" style="left:616px;top:598px;width:79px;height:13px;line-height:12px">10,000</div>
<div class="c it n d" style="left:695px;top:598px;width:79px;height:13px;line-height:12px">10,000</div>
<div class="c it n d" style="left:774px;top:598px;width:78px;height:13px;line-height:12px"></div>
<div class="c it n d" style="left:852px;top:598px;width:79px;height:13px;line-height:12px"></div>
<div class="c it n d nl" style="left:931px;top:598px;width:79px;height:13px;line-height:12px">10,000</div>
<div class="c sb g" style="left:46px;top:611px;width:333px;height:14px;line-height:12px;padding-left:29.6px">&lt;Без обособления&gt;</div>
<div class="c sb n d" style="left:379px;top:611px;width:79px;height:14px;line-height:12px">10,000</div>
<div class="c sb n d" style="left:458px;top:611px;width:79px;height:14px;line-height:12px"></div>
<div class="c sb n d" style="left:537px;top:611px;width:79px;height:14px;line-height:12px"></div>
<div class="c sb n d" style="left:616px;top:611px;width:79px;height:14px;line-height:12px">10,000</div>
<div class="c sb n d" style="left:695px;top:611px;width:79px;height:14px;line-height:12px">10,000</div>
<div class="c sb n d" style="left:774px;top:611px;width:78px;height:14px;line-height:12px"></div>
<div class="c sb n d" style="left:852px;top:611px;width:79px;height:14px;line-height:12px"></div>
<div class="c sb n d nl" style="left:931px;top:611px;width:79px;height:14px;line-height:12px">10,000</div>
<div class="c it" style="left:46px;top:625px;width:64px;height:13px;line-height:12px"></div>
<div class="c it da" style="left:110px;top:625px;width:70px;height:13px;line-height:12px">Арт-980000</div>
<div class="c it" style="left:180px;top:625px;width:163px;height:13px;line-height:12px">Молоко "Домик в деревне" 3.2%,</div>
<div class="c it" style="left:343px;top:625px;width:36px;height:13px;line-height:12px">шт</div>
<div class="c it n d" style="left:379px;top:625px;width:79px;height:13px;line-height:12px">10,000</div>
<div class="c it n d" style="left:458px;top:625px;width:79px;height:13px;line-height:12px"></div>
<div class="c it n d" style="left:537px;top:625px;width:79px;height:13px;line-height:12px"></div>
<div class="c it n d" style="left:616px;top:625px;width:79px;height:13px;line-height:12px">10,000</div>
<div class="c it n d" style="left:695px;top:625px;width:79px;height:13px;line-height:12px">10,000</div>
<div class="c it n d" style="left:774px;top:625px;width:78px;height:13px;line-height:12px"></div>
<div class="c it n d" style="left:852px;top:625px;width:79px;height:13px;line-height:12px"></div>
<div class="c it n d nl" style="left:931px;top:625px;width:79px;height:13px;line-height:12px">10,000</div>
<div class="c sb g" style="left:46px;top:638px;width:333px;height:14px;line-height:12px;padding-left:29.6px">&lt;Без обособления&gt;</div>
<div class="c sb n d" style="left:379px;top:638px;width:79px;height:14px;line-height:12px">10,000</div>
<div class="c sb n d" style="left:458px;top:638px;width:79px;height:14px;line-height:12px"></div>
<div class="c sb n d" style="left:537px;top:638px;width:79px;height:14px;line-height:12px"></div>
<div class="c sb n d" style="left:616px;top:638px;width:79px;height:14px;line-height:12px">10,000</div>
<div class="c sb n d" style="left:695px;top:638px;width:79px;height:14px;line-height:12px">10,000</div>
<div class="c sb n d" style="left:774px;top:638px;width:78px;height:14px;line-height:12px"></div>
<div class="c sb n d" style="left:852px;top:638px;width:79px;height:14px;line-height:12px"></div>
<div class="c sb n d nl" style="left:931px;top:638px;width:79px;height:14px;line-height:12px">10,000</div>
<div class="c it" style="left:46px;top:652px;width:64px;height:13px;line-height:12px"></div>
<div class="c it da" style="left:110px;top:652px;width:70px;height:13px;line-height:12px">Арт-89000</div>
<div class="c it" style="left:180px;top:652px;width:163px;height:13px;line-height:12px">Молоко "Домик в деревне" 4.5%,</div>
<div class="c it" style="left:343px;top:652px;width:36px;height:13px;line-height:12px">шт</div>
<div class="c it n d" style="left:379px;top:652px;width:79px;height:13px;line-height:12px">10,000</div>
<div class="c it n d" style="left:458px;top:652px;width:79px;height:13px;line-height:12px"></div>
<div class="c it n d" style="left:537px;top:652px;width:79px;height:13px;line-height:12px"></div>
<div class="c it n d" style="left:616px;top:652px;width:79px;height:13px;line-height:12px">10,000</div>
<div class="c it n d" style="left:695px;top:652px;width:79px;height:13px;line-height:12px">10,000</div>
<div class="c it n d" style="left:774px;top:652px;width:78px;height:13px;line-height:12px"></div>
<div class="c it n d" style="left:852px;top:652px;width:79px;height:13px;line-height:12px"></div>
<div class="c it n d nl" style="left:931px;top:652px;width:79px;height:13px;line-height:12px">10,000</div>
<div class="c sb g" style="left:46px;top:665px;width:333px;height:13px;line-height:12px;padding-left:29.6px">&lt;Без обособления&gt;</div>
<div class="c sb n d" style="left:379px;top:665px;width:79px;height:13px;line-height:12px">10,000</div>
<div class="c sb n d" style="left:458px;top:665px;width:79px;height:13px;line-height:12px"></div>
<div class="c sb n d" style="left:537px;top:665px;width:79px;height:13px;line-height:12px"></div>
<div class="c sb n d" style="left:616px;top:665px;width:79px;height:13px;line-height:12px">10,000</div>
<div class="c sb n d" style="left:695px;top:665px;width:79px;height:13px;line-height:12px">10,000</div>
<div class="c sb n d" style="left:774px;top:665px;width:78px;height:13px;line-height:12px"></div>
<div class="c sb n d" style="left:852px;top:665px;width:79px;height:13px;line-height:12px"></div>
<div class="c sb n d nl" style="left:931px;top:665px;width:79px;height:13px;line-height:12px">10,000</div>
<div class="c it" style="left:46px;top:678px;width:64px;height:14px;line-height:12px"></div>
<div class="c it da" style="left:110px;top:678px;width:70px;height:14px;line-height:12px">Арт-879000</div>
<div class="c it" style="left:180px;top:678px;width:163px;height:14px;line-height:12px">Молоко "Останкинское" 1.5%,</div>
<div class="c it" style="left:343px;top:678px;width:36px;height:14px;line-height:12px">шт</div>
<div class="c it n d" style="left:379px;top:678px;width:79px;height:14px;line-height:12px">10,000</div>
<div class="c it n d" style="left:458px;top:678px;width:79px;height:14px;line-height:12px"></div>
<div class="c it n d" style="left:537px;top:678px;width:79px;height:14px;line-height:12px"></div>
<div class="c it n d" style="left:616px;top:678px;width:79px;height:14px;line-height:12px">10,000</div>
<div class="c it n d" style="left:695px;top:678px;width:79px;height:14px;line-height:12px">10,000</div>
<div class="c it n d" style="left:774px;top:678px;width:78px;height:14px;line-height:12px"></div>
<div class="c it n d" style="left:852px;top:678px;width:79px;height:14px;line-height:12px"></div>
<div class="c it n d nl" style="left:931px;top:678px;width:79px;height:14px;line-height:12px">10,000</div>
<div class="c sb g" style="left:46px;top:692px;width:333px;height:13px;line-height:12px;padding-left:29.6px">&lt;Без обособления&gt;</div>
<div class="c sb n d" style="left:379px;top:692px;width:79px;height:13px;line-height:12px">10,000</div>
<div class="c sb n d" style="left:458px;top:692px;width:79px;height:13px;line-height:12px"></div>
<div class="c sb n d" style="left:537px;top:692px;width:79px;height:13px;line-height:12px"></div>
<div class="c sb n d" style="left:616px;top:692px;width:79px;height:13px;line-height:12px">10,000</div>
<div class="c sb n d" style="left:695px;top:692px;width:79px;height:13px;line-height:12px">10,000</div>
<div class="c sb n d" style="left:774px;top:692px;width:78px;height:13px;line-height:12px"></div>
<div class="c sb n d" style="left:852px;top:692px;width:79px;height:13px;line-height:12px"></div>
<div class="c sb n d nl" style="left:931px;top:692px;width:79px;height:13px;line-height:12px">10,000</div>
</div>
<div class="a" id="tree" style="left:0;top:0;width:46px;height:684px;overflow:hidden">
<div class="tl" style="left:19px;top:176px;width:1px;height:53px"></div>
<div class="tl" style="left:19px;top:228px;width:26px;height:1px"></div>
<div class="tb" style="left:15px;top:168px"></div>
<div class="tl" style="left:19px;top:298px;width:1px;height:400px"></div>
<div class="tb" style="left:15px;top:290px"></div>
<div class="tl" style="left:29px;top:309px;width:1px;height:20px"></div>
<div class="tl" style="left:29px;top:329px;width:16px;height:1px"></div>
<div class="tb" style="left:25px;top:304px"></div>
<div class="tl" style="left:29px;top:338px;width:1px;height:18px"></div>
<div class="tl" style="left:29px;top:356px;width:16px;height:1px"></div>
<div class="tb" style="left:25px;top:332px"></div>
<div class="tl" style="left:29px;top:365px;width:1px;height:17px"></div>
<div class="tl" style="left:29px;top:382px;width:16px;height:1px"></div>
<div class="tb" style="left:25px;top:359px"></div>
<div class="tl" style="left:29px;top:391px;width:1px;height:18px"></div>
<div class="tl" style="left:29px;top:409px;width:16px;height:1px"></div>
<div class="tb" style="left:25px;top:385px"></div>
<div class="tl" style="left:29px;top:418px;width:1px;height:18px"></div>
<div class="tl" style="left:29px;top:436px;width:16px;height:1px"></div>
<div class="tb" style="left:25px;top:412px"></div>
<div class="tl" style="left:29px;top:445px;width:1px;height:18px"></div>
<div class="tl" style="left:29px;top:463px;width:16px;height:1px"></div>
<div class="tb" style="left:25px;top:439px"></div>
<div class="tl" style="left:29px;top:472px;width:1px;height:18px"></div>
<div class="tl" style="left:29px;top:490px;width:16px;height:1px"></div>
<div class="tb" style="left:25px;top:466px"></div>
<div class="tl" style="left:29px;top:499px;width:1px;height:18px"></div>
<div class="tl" style="left:29px;top:517px;width:16px;height:1px"></div>
<div class="tb" style="left:25px;top:493px"></div>
<div class="tl" style="left:29px;top:526px;width:1px;height:17px"></div>
<div class="tl" style="left:29px;top:543px;width:16px;height:1px"></div>
<div class="tb" style="left:25px;top:520px"></div>
<div class="tl" style="left:29px;top:552px;width:1px;height:18px"></div>
<div class="tl" style="left:29px;top:570px;width:16px;height:1px"></div>
<div class="tb" style="left:25px;top:546px"></div>
<div class="tl" style="left:29px;top:579px;width:1px;height:18px"></div>
<div class="tl" style="left:29px;top:597px;width:16px;height:1px"></div>
<div class="tb" style="left:25px;top:573px"></div>
<div class="tl" style="left:29px;top:606px;width:1px;height:18px"></div>
<div class="tl" style="left:29px;top:624px;width:16px;height:1px"></div>
<div class="tb" style="left:25px;top:600px"></div>
<div class="tl" style="left:29px;top:633px;width:1px;height:18px"></div>
<div class="tl" style="left:29px;top:651px;width:16px;height:1px"></div>
<div class="tb" style="left:25px;top:627px"></div>
<div class="tl" style="left:29px;top:660px;width:1px;height:17px"></div>
<div class="tl" style="left:29px;top:677px;width:16px;height:1px"></div>
<div class="tb" style="left:25px;top:654px"></div>
<div class="tl" style="left:29px;top:686px;width:1px;height:18px"></div>
<div class="tl" style="left:29px;top:704px;width:16px;height:1px"></div>
<div class="tb" style="left:25px;top:680px"></div>
</div>
<div class="a" style="left:45px;top:124px;width:1px;height:560px;background:#c2c2c2"></div>
<div class="a" style="left:378px;top:124px;width:1px;height:560px;background:#c2c2c2"></div>
<div class="a" style="left:14px;top:287px;width:1020px;height:1px;background:#c6c4b8"></div>
<svg class="a" style="left:44px;top:299px" width="69" height="20" viewBox="0 0 69 20"><rect x="2.05" y="1.9" width="63.9" height="14.95" rx="1.8" fill="#fff" stroke="#6e6e6e" stroke-width="1.5"/></svg>
<svg class="a" style="left:69px;top:302px" width="18" height="14" viewBox="0 0 18 14"><defs><filter id="bl" x="-10%" y="-10%" width="120%" height="120%"><feGaussianBlur stdDeviation=".45"/></filter><clipPath id="cp"><rect x="0" y="0" width="17.9" height="13.2"/></clipPath></defs><g clip-path="url(#cp)"><rect width="18" height="13.4" fill="#e9a8d8"/><g filter="url(#bl)"><rect x="0" y="0" width=".9" height="13.4" fill="#b274bd"/><path d="M1.4 .4 H12.6 V5.4 L11 8.6 L6 9.6 L1.6 8 Z" fill="#f3dcf0"/><circle cx="3.4" cy="3" r="1.1" fill="#f3d56a"/><circle cx="5.6" cy="1.6" r="1" fill="#f4a6c8"/><circle cx="7.4" cy="3" r="1.5" fill="#f7b9c4"/><circle cx="11.4" cy="1.4" r=".9" fill="#c05fc6"/><path d="M8.4 4.4 L11.2 3.6 L11.6 7 L9.4 8.6 L7.6 7.4 Z" fill="#7c9fe6"/><rect x="5" y="5.8" width="2.4" height="1.5" fill="#c437a6"/><circle cx="12.4" cy="6.4" r=".7" fill="#edc25c"/><rect x="14.8" y="0" width="2.6" height="1.6" fill="#f0566a"/><rect x="13.4" y="2" width="4.6" height=".9" fill="#f5a238"/><path d="M11.8 9.2 L13.6 7.2 L15.8 6.8 L16.4 8.6 L14.8 10.6 L12.6 11.2 Z" fill="#78392a"/><rect x="1" y="10.6" width="9" height="1" fill="#e394cb"/></g></g></svg>
<div class="a" style="left:35px;top:686px;width:1000px;height:11px;border-radius:4px;background:#a2a2a2"></div>
<div class="a" style="left:22px;top:688px;width:0;height:0;border-top:3.5px solid transparent;border-bottom:3.5px solid transparent;border-right:4px solid #d6d6d6"></div>
</body></html>
